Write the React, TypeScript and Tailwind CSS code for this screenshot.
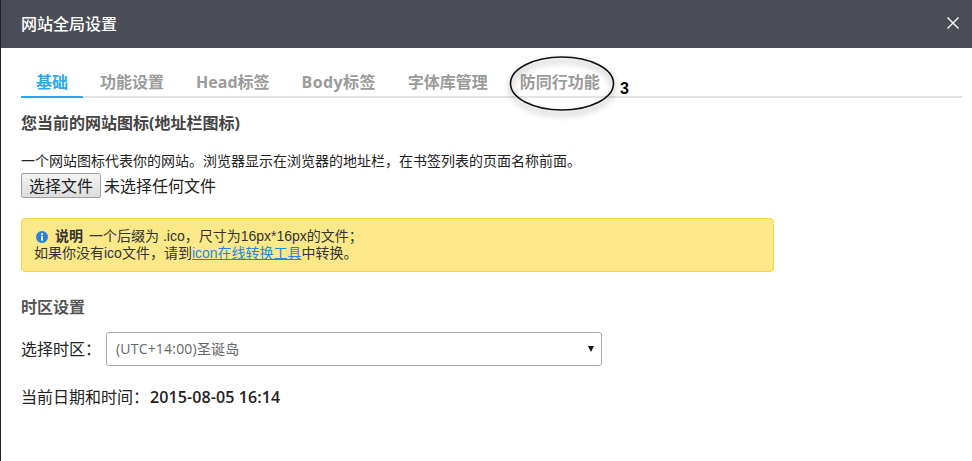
const cjk = "font-['Open_Sans','Noto_Sans_CJK_SC',sans-serif]";

const tabs = [
  { label: "功能设置", track: "" },
  { label: "Head标签", track: "" },
  { label: "Body标签", track: "tracking-[0.4px]" },
  { label: "字体库管理", track: "" },
  { label: "防同行功能", track: "" },
];

export default function App() {
  return (
    <div className={`${cjk} relative h-[461px] w-[972px] overflow-hidden border-l border-[#222] bg-white text-[#222]`}>
      {/* Header */}
      <div className="flex h-12 items-center justify-between bg-[#4a4d55] pl-5 pr-[13px]">
        <span className="text-base font-medium text-white">网站全局设置</span>
        <svg width="12" height="12" viewBox="0 0 12 12" className="-mt-[3px] text-white" fill="none" stroke="currentColor" strokeWidth="1.4">
          <path d="M0.5 0.5 L11.5 11.5 M11.5 0.5 L0.5 11.5" />
        </svg>
      </div>

      <div className="px-5">
        {/* Tabs */}
        <div className="relative -mr-[10px] mt-[22px] flex h-7 gap-[2px] border-b-2 border-[#e3e3e3]">
          <div className="-mb-[2px] h-7 border-b-2 border-[#29a9ee] px-[15px] text-base font-bold leading-6 text-[#29a9ee]">基础</div>
          {tabs.map((t) => (
            <div key={t.label} className={`px-[15px] text-base font-bold leading-6 text-[#9b9b9b] ${t.track}`}>{t.label}</div>
          ))}

          {/* Annotation */}
          <svg width="116" height="70" viewBox="0 0 116 70" className="absolute left-[484px] -top-[14px] drop-shadow-[0_4px_3px_rgba(0,0,0,0.45)]" fill="none">
            <ellipse cx="57" cy="27.5" rx="51.5" ry="26.5" stroke="#111" strokeWidth="1.6" />
          </svg>
          <span className="absolute left-[599px] top-[11px] font-['Liberation_Sans'] text-base font-bold leading-4 text-black">3</span>
        </div>

        <h3 className="mt-[15px] text-base font-bold leading-5 text-[#444]">您当前的网站图标(地址栏图标)</h3>

        <p className="mt-[19px] text-sm leading-[18px] text-[#222]">一个网站图标代表你的网站。浏览器显示在浏览器的地址栏，在书签列表的页面名称前面。</p>

        <div className="mt-[3px] flex h-[25px] items-center gap-[3px] text-base">
          <button className="h-[25px] w-20 rounded-[2px] border border-[#a0a0a0] bg-gradient-to-b from-[#f4f4f4] to-[#dcdcdc] text-base">选择文件</button>
          <span>未选择任何文件</span>
        </div>

        {/* Notice */}
        <div className="mt-5 h-[54px] w-[753px] rounded-[4px] border border-[#f8d43d] bg-[#fbe989] px-3 py-[9px] font-['Liberation_Sans','Noto_Sans_CJK_SC',sans-serif] text-sm leading-[17px] text-[#333]">
          <div className="flex items-center">
            <svg width="12" height="12" viewBox="0 0 13 13" className="ml-[2px] mr-[7px]">
              <circle cx="6.5" cy="6.5" r="6.5" fill="#2a7fe0" />
              <rect x="5.5" y="2.5" width="2" height="2" fill="#fff" />
              <rect x="5.5" y="5.5" width="2" height="5" fill="#fff" />
            </svg>
            <b className="mr-[6px] text-[#333]">说明</b>
            <span>一个后缀为 .ico，尺寸为16px*16px的文件；</span>
          </div>
          <div>
            如果你没有ico文件，请到<a className="text-[#1e88e5] underline">icon在线转换工具</a>中转换。
          </div>
        </div>

        <h3 className="mt-[25px] text-base font-bold leading-5 text-[#555]">时区设置</h3>

        <div className="mt-[15px] flex items-center">
          <span className="w-[85px] text-base">选择时区：</span>
          <div className="flex h-[34px] w-[496px] items-center justify-between rounded-[3px] border border-[#aaa] pl-[9px] pr-[7px] text-sm text-[#666]">
            <span className="tracking-[0.2px]">(UTC+14:00)圣诞岛</span>
            <span className="h-0 w-0 border-x-[3px] border-t-[6px] border-x-transparent border-t-[#111]" />
          </div>
        </div>

        <p className="mt-[21px] text-base leading-5 text-[#222]">
          当前日期和时间：<span className="ml-px font-semibold tracking-[0.1px]">2015-08-05 16:14</span>
        </p>
      </div>
    </div>
  );
}
